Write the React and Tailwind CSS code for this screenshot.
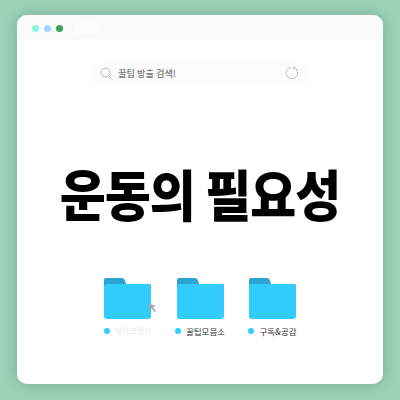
function Folder({ label, faint }) {
  return (
    <div className="relative flex w-[47px] flex-col items-center">
      <svg width="47" height="41" viewBox="0 0 47 41">
        <path d="M2 0H18Q20.500 0 21 2.500L22 6H45Q47 6 47 8V20H0V2Q0 0 2 0Z" fill="#2ba4d1" />
        <path d="M3 6H43Q47 6 47 10V38Q47 41 44 41H3Q0 41 0 38V9Q0 6 3 6Z" fill="#33ccff" />
      </svg>
      <div className="mt-[6px] flex w-[70px] items-center justify-center gap-[5px] whitespace-nowrap">
        <span className="h-[6px] w-[6px] shrink-0 rounded-full bg-[#33ccff]" />
        <span className={faint ? 'text-[8px] leading-[12px] text-[#ececec]' : 'text-[8.500px] leading-[12px] text-[#333]'}>{label}</span>
      </div>
    </div>
  )
}

export default function App() {
  return (
    <div
      className="flex h-[400px] w-[400px] items-start bg-[#9dd1b8] pl-[17px] pt-[15px]"
      style={{ fontFamily: '"Noto Sans CJK KR", "Noto Sans", sans-serif' }}
    >
      <div className="flex h-[369px] w-[366px] flex-col overflow-hidden rounded-[10px] bg-white shadow-[0_0_14px_rgba(70,130,105,0.45)]">
        <div className="flex h-[25px] shrink-0 items-center gap-[5px] bg-[#fafafa] pl-[15px] pt-[1px]">
          <span className="h-[7px] w-[7px] rounded-full bg-[#8ff5e0]" />
          <span className="h-[7px] w-[7px] rounded-full bg-[#9dd9fb]" />
          <span className="h-[7px] w-[7px] rounded-full bg-[#34a853]" />
          <span className="ml-[6px] h-[11px] w-[24px] bg-[#fdfdfd]" />
        </div>

        <div className="mx-auto mt-[21px] flex h-[24px] w-[222px] items-center rounded-full bg-[#fcfcfc] pl-[11px] pr-[12px]">
          <svg width="13" height="13" viewBox="0 0 13 13" fill="none" stroke="#b5b5b5" strokeWidth="1">
            <circle cx="5.500" cy="5.500" r="4.500" />
            <path d="M9 9L12.500 12.500" />
          </svg>
          <span className="ml-[5px] text-[9.200px] font-medium leading-[14px] text-[#777]">꿀팁 방출 검색!</span>
          <svg className="ml-auto" width="14" height="14" viewBox="0 0 14 14" fill="none" stroke="#c4c4c4" strokeWidth="1">
            <path d="M9 1.600A5.800 5.800 0 1 1 6 1.300" />
            <path d="M8.500 0.500L9.800 1.900L8.300 2.900" stroke="#a8a8a8" />
          </svg>
        </div>

        <h1 className="mt-[65px] scale-y-[1.1] text-center text-[50px] font-black leading-[84px] tracking-[-1px] text-black">운동의 필요성</h1>

        <div className="mt-[44px] flex justify-center gap-[25.500px]">
          <div className="relative">
            <Folder label="재테크정보" faint />
            <svg className="absolute left-[44px] top-[25px]" width="9" height="10" viewBox="0 0 9 10">
              <path d="M0.500 0.500L7.500 3L5 4.500L8 8L6.800 9L3.800 5.500L2.200 7.800Z" fill="#a5a5a5" />
            </svg>
          </div>
          <Folder label="꿀팁모음소" />
          <Folder label="구독&공감" />
        </div>
      </div>
    </div>
  )
}
